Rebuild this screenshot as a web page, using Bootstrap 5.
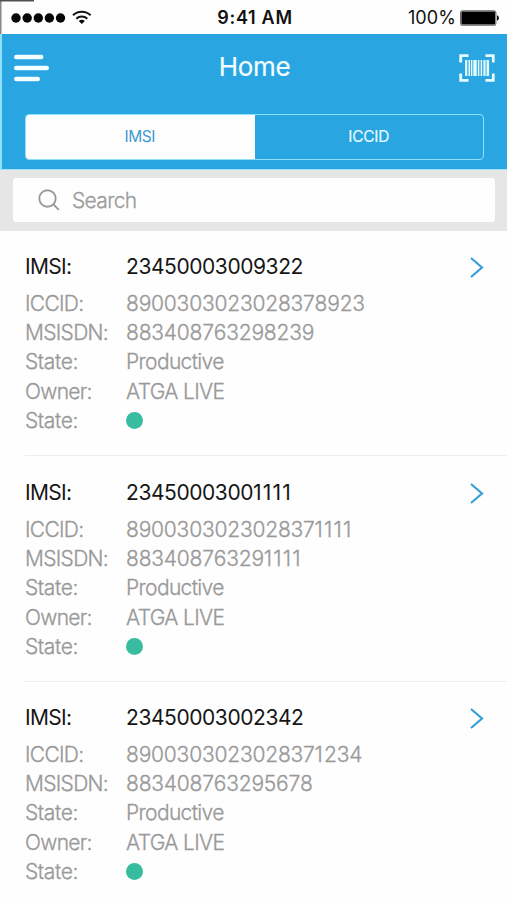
<!DOCTYPE html>
<html lang="en">
<head>
<meta charset="utf-8">
<meta name="viewport" content="width=device-width, initial-scale=1">
<title>Home</title>
<link href="https://cdn.jsdelivr.net/npm/bootstrap@5.3.0/dist/css/bootstrap.min.css" rel="stylesheet">
<style>
  body { font-family: Inter, "Liberation Sans", sans-serif; background: #fefefe; color: #161616; overflow-x: hidden; }
  svg { display: block; flex: none; }
  .status-bar { height: 34px; padding: 2px 8px 0 11px; color: #111;
    background: linear-gradient(#55504e, #55504e) 0 0 / 34px 1.5px no-repeat, linear-gradient(#8a8684, #8a8684) 0 0 / 1.5px 34px no-repeat, #fefefe; }
  .status-side { flex: 1 1 0; }
  .clock { font-size: 18px; font-weight: 600; letter-spacing: .7px; line-height: 30px; }
  .charge { font-size: 18px; font-weight: 400; letter-spacing: .1px; line-height: 30px; margin-right: 4px; }
  .app-header { height: 136px; background: #29a5e1; border-left: 2px solid #8fe2fb; border-bottom: 1px solid #9fe3fa; color: #f2fdff; }
  .title-bar { height: 68px; padding: 0 12px 0 12px; }
  .title-bar h1 { font-size: 26px; line-height: 62px; letter-spacing: -.3px; font-weight: 400; padding-bottom: 2px; -webkit-text-stroke: .2px; }
  .segments { height: 46px; margin: 12px 23px 0; border: 1.5px solid #8fe0fb; border-radius: 4px; overflow: hidden; }
  .segments .btn { border: 0; border-radius: 0; padding: 0 1px 0 0; font-size: 15.5px; letter-spacing: -.4px; line-height: 42px; color: #e4fbff; }
  .segments .btn.active { background: #fefefe; color: #3b9bd4; }
  .segments .btn + .btn { padding: 0; letter-spacing: -.25px; -webkit-text-stroke: .2px; }
  .search-bar { height: 61px; padding: 8px 12px 9px 13px; background: #e6e6e7; }
  .search-box { height: 44px; border-radius: 3px; background: #fefefe; padding-left: 25px; color: #9c9c9c; font-size: 21px; letter-spacing: -.65px; }
  .search-label { font-weight: 300; padding-top: 1px; -webkit-text-stroke: .3px; }
  .sim { margin-left: 25px; padding-top: 17px; height: 225px; border-bottom: 1px solid #ededee; font-size: 21px; }
  .sim:nth-child(2) { height: 226px; padding-top: 18px; }
  .sim:nth-child(3) { height: 218px; border: 0; }
  .sim-line { height: 29.2px; line-height: 29.2px; color: #999; font-weight: 300; white-space: nowrap; -webkit-text-stroke: .3px; }
  .sim-head { height: 37px; line-height: 37px; margin-bottom: 4px; color: #161616; font-weight: 400; padding-right: 23px; -webkit-text-stroke: 0; }
  .key { width: 101px; letter-spacing: -.7px; }
  .key-state { letter-spacing: -.4px; }
  .num { letter-spacing: -.2px; font-kerning: none; font-feature-settings: "calt" 0; }
  .sim-head .num { letter-spacing: -.43px; }
  .num .ones, .sim-head .num .ones { letter-spacing: 1.2px; }
  .word { letter-spacing: -.65px; }
  .dot { width: 17px; height: 17px; background: #37bca0; }
</style>
<script src="https://cdn.jsdelivr.net/npm/bootstrap@5.3.0/dist/js/bootstrap.bundle.min.js"></script>
</head>
<body>
<div class="status-bar d-flex align-items-center">
  <div class="status-side d-flex align-items-center">
    <svg width="82" height="18" viewBox="0 0 82 18" fill="#050505">
      <circle cx="5" cy="9" r="4.7"/><circle cx="16.2" cy="9" r="4.7"/><circle cx="27.3" cy="9" r="4.7"/><circle cx="38.4" cy="9" r="4.7"/><circle cx="49.5" cy="9" r="4.7"/>
      <g fill="none" stroke="#111" stroke-width="2"><path d="M62 6.2a12.7 12.7 0 0 1 17.6 0M65.3 9.7a8 8 0 0 1 11 0"/></g>
      <path d="M67.8 12.1a4.3 4.3 0 0 1 6 0l-3 3z"/>
    </svg>
  </div>
  <div class="clock">9:41 AM</div>
  <div class="status-side d-flex align-items-center justify-content-end">
    <span class="charge">100%</span>
    <svg width="39" height="16" viewBox="0 0 39 16"><rect x=".6" y=".7" width="35.3" height="14.6" rx="2.4" fill="#fefefe" stroke="#666" stroke-width="1.1"/><rect x="1.4" y="1.5" width="33.7" height="13" rx="1.4" fill="#000"/><path d="M37 5.3q2 .6 2 2.7t-2 2.7z" fill="#111"/></svg>
  </div>
</div>
<header class="app-header">
  <div class="title-bar d-flex align-items-center">
    <div class="status-side"><svg width="36" height="28" viewBox="0 0 36 28" stroke="#f2fdff" stroke-width="4.4" stroke-linecap="round"><path d="M2.2 3h25M2.2 14h30.6M2.2 25h21.6"/></svg></div>
    <h1 class="m-0">Home</h1>
    <div class="status-side d-flex justify-content-end">
      <svg width="37" height="28" viewBox="0 0 37 28" fill="none" stroke="#e6fbff">
        <path stroke-width="2.8" d="M10.5 1.7H2.7v6.8M27.5 1.7h7.8v6.8M10.5 26.3H2.7v-6.8M27.5 26.3h7.8v-6.8"/>
        <path stroke-width="2.2" d="M8.2 6v16M26.5 6v16"/><path stroke-width="1.5" d="M11.2 6v16M13.6 6v16M23.4 6v16"/><path stroke-width="3.4" d="M17 6v16"/><path stroke-width="1.5" d="M20.6 6v16"/><path stroke-width="2.6" d="M29.8 6v16"/>
      </svg>
    </div>
  </div>
  <div class="segments d-flex">
    <button class="btn active w-50">IMSI</button>
    <button class="btn w-50">ICCID</button>
  </div>
</header>
<div class="search-bar">
  <div class="search-box d-flex align-items-center">
    <svg width="22" height="22" viewBox="0 0 22 22" fill="none" stroke="#999" stroke-width="1.9"><circle cx="9.5" cy="9.5" r="8.2"/><path d="M15.2 15.2l5.6 5.6"/></svg>
    <span class="ms-2 ps-1 search-label">Search</span>
  </div>
</div>
<main>
  <article class="sim">
    <div class="sim-line sim-head d-flex"><span class="key">IMSI:</span><span class="num">23450003009322</span><svg class="ms-auto align-self-center" width="14" height="22" viewBox="0 0 14 22" fill="none" stroke="#369fd8" stroke-width="2.2"><path d="M1 2l11 9.5L1 21"/></svg></div>
    <div class="sim-line d-flex"><span class="key">ICCID:</span><span class="num">8900303023028378923</span></div>
    <div class="sim-line d-flex"><span class="key">MSISDN:</span><span class="num">883408763298239</span></div>
    <div class="sim-line d-flex"><span class="key key-state">State:</span><span class="word">Productive</span></div>
    <div class="sim-line d-flex"><span class="key">Owner:</span><span class="word">ATGA LIVE</span></div>
    <div class="sim-line d-flex align-items-center"><span class="key key-state">State:</span><span class="dot rounded-circle"></span></div>
  </article>
  <article class="sim">
    <div class="sim-line sim-head d-flex"><span class="key">IMSI:</span><span class="num">2345000300<span class="ones">1111</span></span><svg class="ms-auto align-self-center" width="14" height="22" viewBox="0 0 14 22" fill="none" stroke="#369fd8" stroke-width="2.2"><path d="M1 2l11 9.5L1 21"/></svg></div>
    <div class="sim-line d-flex"><span class="key">ICCID:</span><span class="num">890030302302837<span class="ones">1111</span></span></div>
    <div class="sim-line d-flex"><span class="key">MSISDN:</span><span class="num">88340876329<span class="ones">1111</span></span></div>
    <div class="sim-line d-flex"><span class="key key-state">State:</span><span class="word">Productive</span></div>
    <div class="sim-line d-flex"><span class="key">Owner:</span><span class="word">ATGA LIVE</span></div>
    <div class="sim-line d-flex align-items-center"><span class="key key-state">State:</span><span class="dot rounded-circle"></span></div>
  </article>
  <article class="sim">
    <div class="sim-line sim-head d-flex"><span class="key">IMSI:</span><span class="num">23450003002342</span><svg class="ms-auto align-self-center" width="14" height="22" viewBox="0 0 14 22" fill="none" stroke="#369fd8" stroke-width="2.2"><path d="M1 2l11 9.5L1 21"/></svg></div>
    <div class="sim-line d-flex"><span class="key">ICCID:</span><span class="num">890030302302837<span class="ones">1</span>234</span></div>
    <div class="sim-line d-flex"><span class="key">MSISDN:</span><span class="num">883408763295678</span></div>
    <div class="sim-line d-flex"><span class="key key-state">State:</span><span class="word">Productive</span></div>
    <div class="sim-line d-flex"><span class="key">Owner:</span><span class="word">ATGA LIVE</span></div>
    <div class="sim-line d-flex align-items-center"><span class="key key-state">State:</span><span class="dot rounded-circle"></span></div>
  </article>
</main>
</body>
</html>
